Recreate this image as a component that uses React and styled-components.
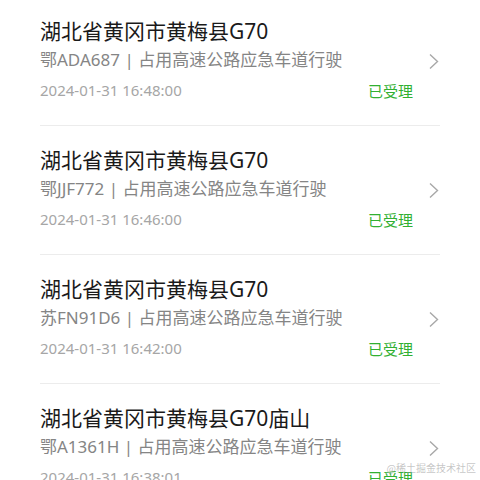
import styled, { createGlobalStyle } from 'styled-components'
import React from 'react'

const GlobalStyle = createGlobalStyle`
  html, body {
    margin: 0;
    padding: 0;
    background: #ffffff;
    font-family: "Noto Sans", "Noto Sans CJK SC", sans-serif;
    overflow: hidden;
  }
`

const Page = styled.div`
  width: 480px;
  height: 480px;
  position: relative;
  overflow: hidden;
  background: #fff;
`

const List = styled.div`
  margin-top: -3px;
  display: flex;
  flex-direction: column;
`

const Item = styled.div`
  margin: 0 40px;
  padding: 20px 0 20px;
  height: 129px;
  box-sizing: border-box;
  border-bottom: 1px solid #ececec;
  display: flex;
  align-items: center;
`

const Content = styled.div`
  flex: 1;
  display: flex;
  flex-direction: column;
`

const Title = styled.div`
  font-size: 21px;
  line-height: 28px;
  color: #1a1a1a;
  height: 28px;
  white-space: nowrap;
`

const Sub = styled.div`
  font-size: 17px;
  line-height: 30px;
  color: #858585;
  white-space: nowrap;
`

const DateRow = styled.div`
  display: flex;
  justify-content: space-between;
  align-items: center;
  height: 30px;
`

const Time = styled.span`
  font-size: 15px;
  color: #a6a6a6;
`

const Status = styled.span`
  font-size: 15px;
  color: #31b031;
`

const Arrow = styled.div`
  width: 27px;
  display: flex;
  justify-content: flex-end;
  align-items: center;
  color: #a8a8a8;
`

const Watermark = styled.div`
  position: absolute;
  right: 4px;
  bottom: 5px;
  font-size: 10px;
  color: rgba(150, 150, 150, 0.55);
  font-family: "Noto Sans CJK SC", serif;
`

const items = [
  { title: '湖北省黄冈市黄梅县G70', plate: '鄂ADA687', time: '2024-01-31 16:48:00' },
  { title: '湖北省黄冈市黄梅县G70', plate: '鄂JJF772', time: '2024-01-31 16:46:00' },
  { title: '湖北省黄冈市黄梅县G70', plate: '苏FN91D6', time: '2024-01-31 16:42:00' },
  { title: '湖北省黄冈市黄梅县G70庙山', plate: '鄂A1361H', time: '2024-01-31 16:38:01' },
]

const Chevron = () => (
  <svg width="12" height="17" viewBox="0 0 12 17" fill="none">
    <path d="M2 1.5 L9.5 8.5 L2 15.5" stroke="currentColor" strokeWidth="1.4" />
  </svg>
)

const App = () => {
  return (
    <Page>
      <GlobalStyle />
      <List>
        {items.map((item, i) => (
          <Item key={i}>
            <Content>
              <Title>{item.title}</Title>
              <Sub>{item.plate} | 占用高速公路应急车道行驶</Sub>
              <DateRow>
                <Time>{item.time}</Time>
                <Status>已受理</Status>
              </DateRow>
            </Content>
            <Arrow>
              <Chevron />
            </Arrow>
          </Item>
        ))}
      </List>
      <Watermark>@稀土掘金技术社区</Watermark>
    </Page>
  )
}

export default App
